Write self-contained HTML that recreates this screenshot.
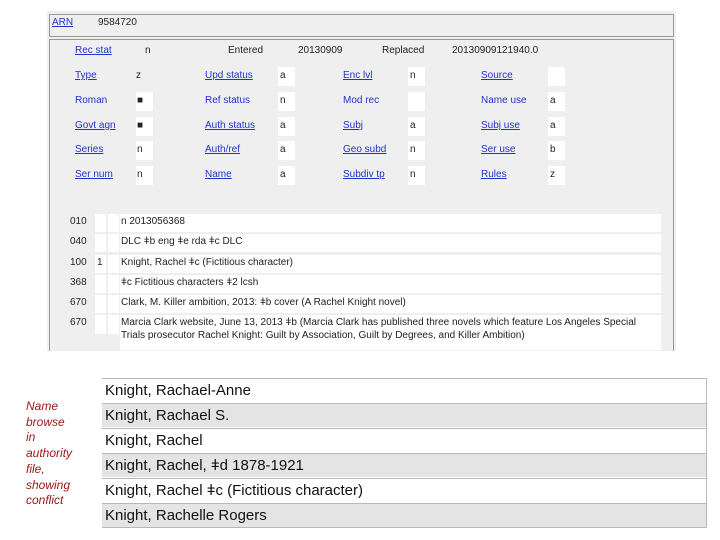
<!DOCTYPE html>
<html><head><meta charset="utf-8"><style>
body{margin:0;width:720px;height:540px;background:#fff;font-family:"Liberation Sans",sans-serif;position:relative;overflow:hidden}
.a{position:absolute;font-size:10px;color:#222;white-space:nowrap}
.l{color:#2233cc;text-decoration:underline}
.b{position:absolute;background:#fff;width:17px;height:19px}
.t{position:absolute;font-size:10px;color:#222;white-space:nowrap}
.w{position:absolute;background:#fff}
.r{position:absolute;left:102px;width:605px;height:24px;border-top:1px solid #b8b8b8;font-size:15px;color:#111;line-height:24px;padding-left:3px;box-sizing:border-box}
</style></head><body>
<div style="position:absolute;left:47px;top:11px;width:629px;height:339px;background:#efefef"></div>
<div style="position:absolute;left:49px;top:14px;width:623px;height:21px;border:1px solid #999;background:#efefef"></div>
<div style="position:absolute;left:49px;top:39px;width:623px;height:311px;border:1px solid #999;border-bottom:none;background:#efefef"></div>
<div class="a l" style="left:52px;top:17px">ARN</div>
<div class="a" style="left:98px;top:17px">9584720</div>

<div class="a l" style="left:75px;top:45px">Rec stat</div>
<div class="a" style="left:145px;top:45px">n</div>
<div class="a" style="left:228px;top:45px">Entered</div>
<div class="a" style="left:298px;top:45px">20130909</div>
<div class="a" style="left:382px;top:45px">Replaced</div>
<div class="a" style="left:452px;top:45px">20130909121940.0</div>

<div class="b" style="left:278px;top:67px"></div><div class="b" style="left:408px;top:67px"></div><div class="b" style="left:548px;top:67px"></div>
<div class="b" style="left:136px;top:92px"></div><div class="b" style="left:278px;top:92px"></div><div class="b" style="left:408px;top:92px"></div><div class="b" style="left:548px;top:92px"></div>
<div class="b" style="left:136px;top:117px"></div><div class="b" style="left:278px;top:117px"></div><div class="b" style="left:408px;top:117px"></div><div class="b" style="left:548px;top:117px"></div>
<div class="b" style="left:136px;top:141px"></div><div class="b" style="left:278px;top:141px"></div><div class="b" style="left:408px;top:141px"></div><div class="b" style="left:548px;top:141px"></div>
<div class="b" style="left:136px;top:166px"></div><div class="b" style="left:278px;top:166px"></div><div class="b" style="left:408px;top:166px"></div><div class="b" style="left:548px;top:166px"></div>

<div class="a l" style="left:75px;top:70px">Type</div><div class="a" style="left:136px;top:70px">z</div>
<div class="a l" style="left:205px;top:70px">Upd status</div><div class="a" style="left:280px;top:70px">a</div>
<div class="a l" style="left:343px;top:70px">Enc lvl</div><div class="a" style="left:410px;top:70px">n</div>
<div class="a l" style="left:481px;top:70px">Source</div>

<div class="a" style="left:75px;top:95px;color:#2233cc">Roman</div><div class="a" style="left:137px;top:95px">■</div>
<div class="a" style="left:205px;top:95px;color:#2233cc">Ref status</div><div class="a" style="left:280px;top:95px">n</div>
<div class="a" style="left:343px;top:95px;color:#2233cc">Mod rec</div>
<div class="a" style="left:481px;top:95px;color:#2233cc">Name use</div><div class="a" style="left:550px;top:95px">a</div>

<div class="a l" style="left:75px;top:120px">Govt agn</div><div class="a" style="left:137px;top:120px">■</div>
<div class="a l" style="left:205px;top:120px">Auth status</div><div class="a" style="left:280px;top:120px">a</div>
<div class="a l" style="left:343px;top:120px">Subj</div><div class="a" style="left:410px;top:120px">a</div>
<div class="a l" style="left:481px;top:120px">Subj use</div><div class="a" style="left:550px;top:120px">a</div>

<div class="a l" style="left:75px;top:144px">Series</div><div class="a" style="left:137px;top:144px">n</div>
<div class="a l" style="left:205px;top:144px">Auth/ref</div><div class="a" style="left:280px;top:144px">a</div>
<div class="a l" style="left:343px;top:144px">Geo subd</div><div class="a" style="left:410px;top:144px">n</div>
<div class="a l" style="left:481px;top:144px">Ser use</div><div class="a" style="left:550px;top:144px">b</div>

<div class="a l" style="left:75px;top:169px">Ser num</div><div class="a" style="left:137px;top:169px">n</div>
<div class="a l" style="left:205px;top:169px">Name</div><div class="a" style="left:280px;top:169px">a</div>
<div class="a l" style="left:343px;top:169px">Subdiv tp</div><div class="a" style="left:410px;top:169px">n</div>
<div class="a l" style="left:481px;top:169px">Rules</div><div class="a" style="left:550px;top:169px">z</div>

<div class="w" style="left:95px;top:214px;width:11px;height:120px"></div>
<div class="w" style="left:108px;top:214px;width:11px;height:120px"></div>
<div class="w" style="left:120px;top:214px;width:541px;height:18px"></div>
<div class="w" style="left:120px;top:234px;width:541px;height:18px"></div>
<div class="w" style="left:120px;top:255px;width:541px;height:18px"></div>
<div class="w" style="left:120px;top:275px;width:541px;height:18px"></div>
<div class="w" style="left:120px;top:295px;width:541px;height:18px"></div>
<div class="w" style="left:120px;top:315px;width:541px;height:35px"></div>
<div style="position:absolute;left:95px;top:232px;width:25px;height:2px;background:#efefef"></div>
<div style="position:absolute;left:95px;top:252px;width:25px;height:3px;background:#efefef"></div>
<div style="position:absolute;left:95px;top:273px;width:25px;height:2px;background:#efefef"></div>
<div style="position:absolute;left:95px;top:293px;width:25px;height:2px;background:#efefef"></div>
<div style="position:absolute;left:95px;top:313px;width:25px;height:2px;background:#efefef"></div>

<div class="t" style="left:70px;top:216px">010</div><div class="t" style="left:121px;top:216px">n 2013056368</div>
<div class="t" style="left:70px;top:236px">040</div><div class="t" style="left:121px;top:236px">DLC ǂb eng ǂe rda ǂc DLC</div>
<div class="t" style="left:70px;top:257px">100</div><div class="t" style="left:97px;top:257px">1</div><div class="t" style="left:121px;top:257px">Knight, Rachel ǂc (Fictitious character)</div>
<div class="t" style="left:70px;top:277px">368</div><div class="t" style="left:121px;top:277px">ǂc Fictitious characters ǂ2 lcsh</div>
<div class="t" style="left:70px;top:297px">670</div><div class="t" style="left:121px;top:297px">Clark, M. Killer ambition, 2013: ǂb cover (A Rachel Knight novel)</div>
<div class="t" style="left:70px;top:317px">670</div><div class="t" style="left:121px;top:317px">Marcia Clark website, June 13, 2013 ǂb (Marcia Clark has published three novels which feature Los Angeles Special</div>
<div class="t" style="left:121px;top:330px">Trials prosecutor Rachel Knight: Guilt by Association, Guilt by Degrees, and Killer Ambition)</div>

<div style="position:absolute;left:26px;top:399px;font-size:12px;line-height:15.7px;color:#a01818;font-style:italic">Name<br>browse<br>in<br>authority<br>file,<br>showing<br>conflict</div>
<div class="r" style="top:378px;background:#fff">Knight, Rachael-Anne</div>
<div class="r" style="top:403px;background:#e4e4e4">Knight, Rachael S.</div>
<div class="r" style="top:428px;background:#fff">Knight, Rachel</div>
<div class="r" style="top:453px;background:#e4e4e4">Knight, Rachel, ǂd 1878-1921</div>
<div class="r" style="top:478px;background:#fff">Knight, Rachel ǂc (Fictitious character)</div>
<div class="r" style="top:503px;background:#e4e4e4;height:25px;border-bottom:1px solid #b8b8b8">Knight, Rachelle Rogers</div>
<div style="position:absolute;left:706px;top:378px;width:1px;height:150px;background:#b8b8b8"></div>
</body></html>
